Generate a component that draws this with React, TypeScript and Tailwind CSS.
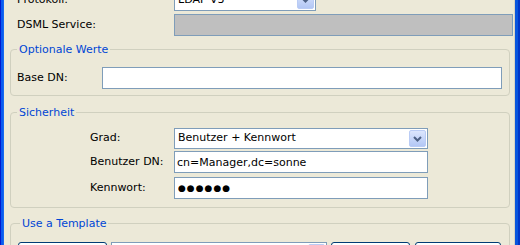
import React from 'react';

function DropButton() {
  return (
    <div className="w-[17px] h-full rounded-[2px] border border-[#BACCF5] bg-gradient-to-b from-[#DCE6FD] to-[#B3C7F5] flex items-center justify-center">
      <svg width="9" height="6" viewBox="0 0 9 6">
        <path d="M1 1 L4.5 4.5 L8 1" stroke="#4D6185" strokeWidth="2" fill="none" />
      </svg>
    </div>
  );
}

function Combo({ value, className }: { value: string; className: string }) {
  return (
    <div className={`flex items-stretch bg-white border border-[#7F9DB9] p-px ${className}`}>
      <span className="flex-1 pl-[2px] flex items-center whitespace-nowrap">{value}</span>
      <DropButton />
    </div>
  );
}

function TextBox({ value, className }: { value: string; className: string }) {
  return (
    <input
      readOnly
      value={value}
      className={`bg-white border border-[#7F9DB9] px-[2px] outline-none text-black ${className}`}
    />
  );
}

function XpButton({ className }: { className: string }) {
  return (
    <button className={`h-[23px] border border-[#003C74] rounded-[3px] bg-gradient-to-b from-white to-[#ECEBE6] ${className}`} />
  );
}

export default function App() {
  return (
    <div className="w-[520px] h-[245px] overflow-hidden flex bg-[#ECE9D8] text-black text-[11px] font-['DejaVu_Sans',sans-serif]">
      {/* window frame, left */}
      <div className="w-[4px] flex shrink-0">
        <div className="w-px bg-[#0019CF]" />
        <div className="w-[2px] bg-[#0A5AF0]" />
        <div className="w-px bg-[#166AEE]" />
      </div>

      <div className="flex-1 flex flex-col">
        <div className="-mt-[11px] flex flex-col pl-[13px] pr-px">
          <div className="flex items-center h-[22px]">
            <span className="w-[157px]">Protokoll:</span>
            <Combo className="w-[142px] h-full" value="LDAP V3" />
          </div>
          <div className="flex items-center h-[22px] mt-[3px]">
            <span className="w-[157px]">DSML Service:</span>
            <div className="flex-1 h-full bg-[#BFBFBF] border border-[#7F9DB9]" />
          </div>
        </div>

        <div className="pl-[6px] pr-[4px] flex flex-col">
          <fieldset className="border border-[#D0D0BF] rounded-[4px] pl-[6px] pr-[7px] pt-[11px] pb-[6px] mt-[7px]">
            <legend className="px-[2px] text-[#0046D5] leading-[13px]">Optionale Werte</legend>
            <div className="flex items-center h-[22px]">
              <span className="w-[85px]">Base DN:</span>
              <TextBox className="flex-1 h-full text-[11px]" value="" />
            </div>
          </fieldset>

          <fieldset className="border border-[#D0D0BF] rounded-[4px] pl-[6px] pr-[7px] pt-[9px] pb-[8px] mt-[10px]">
            <legend className="px-[2px] text-[#0046D5] leading-[13px]">Sicherheit</legend>
            <div className="flex flex-col pl-[73px]">
              <div className="flex items-center h-[21px]">
                <span className="w-[84px]">Grad:</span>
                <Combo className="w-[254px] h-full" value="Benutzer + Kennwort" />
              </div>
              <div className="flex items-center h-[22px] mt-[2px]">
                <span className="w-[84px]">Benutzer DN:</span>
                <TextBox className="w-[254px] h-full text-[11px]" value="cn=Manager,dc=sonne" />
              </div>
              <div className="flex items-center h-[22px] mt-[4px]">
                <span className="w-[84px]">Kennwort:</span>
                <TextBox className="w-[254px] h-full text-[9px] tracking-[1px] pl-[3px]" value="●●●●●●" />
              </div>
            </div>
          </fieldset>

          <fieldset className="border border-[#D0D0BF] rounded-[4px] pl-[7px] pr-[7px] pt-[12px] pb-[6px] mt-[9px]">
            <legend className="ml-[2px] px-[2px] text-[#0046D5] leading-[13px]">Use a Template</legend>
            <div className="flex items-start">
              <XpButton className="w-[89px]" />
              <Combo className="w-[216px] h-[21px] ml-[4px]" value="" />
              <XpButton className="w-[79px] ml-[4px]" />
              <XpButton className="w-[86px] ml-[5px]" />
            </div>
          </fieldset>
        </div>
      </div>

      {/* window frame, right */}
      <div className="w-[6px] flex shrink-0">
        <div className="w-px bg-[#D6D3C4]" />
        <div className="w-[3px] bg-[#0855DD]" />
        <div className="w-[2px] bg-[#0036C8]" />
      </div>
    </div>
  );
}
